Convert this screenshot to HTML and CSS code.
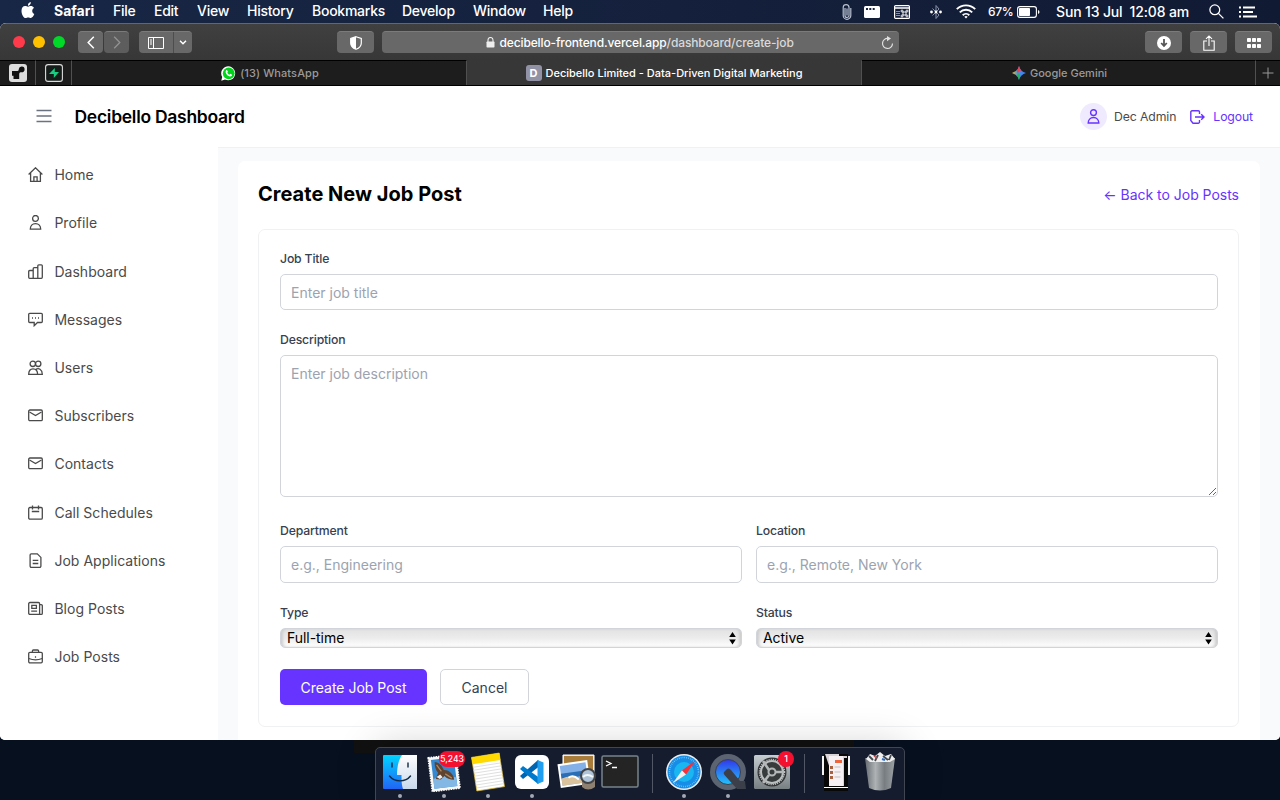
FILE: index.html
```html
<!DOCTYPE html>
<html lang="en">
<head>
<meta charset="utf-8">
<title>Decibello Limited - Data-Driven Digital Marketing</title>
<link rel="stylesheet" href="styles.css">
</head>
<body>
<div class="desktop">
  <header class="menubar">
    <nav class="menus">
      <svg class="apple" width="14" height="17" viewBox="0 0 14 17" fill="#fff"><path d="M9.800 0C8 .3 6.800 1.800 7 3.700 8.700 3.700 10 2 9.800 0ZM7.100 4.700C6 4.700 5.400 4.100 4.100 4.100 2 4.100.5 5.900.5 8.900c0 3.500 2.100 7.100 4.100 7.100 1 0 1.400-.6 2.600-.6s1.500.6 2.600.6c1.500 0 2.700-2 3.500-3.900C10.700 10.800 10.500 7.200 13 5.900 12.200 4.700 11 4.100 9.800 4.100 8.600 4.100 8 4.700 7.100 4.700Z"/></svg>
      <span class="app-name">Safari</span><span>File</span><span>Edit</span><span>View</span><span>History</span><span>Bookmarks</span><span>Develop</span><span>Window</span><span>Help</span>
    </nav>
    <div class="status">
      <svg width="10" height="16" viewBox="0 0 10 16" fill="none" stroke="#b9c1d2" stroke-width="1.200"><path d="M3 4v7.500a2 2 0 0 0 4 0V3.500a2.600 2.600 0 0 0-5.800 0v8a3.800 3.800 0 0 0 7.600 0V4M5 4.500v7"/></svg>
      <svg width="16" height="12" viewBox="0 0 16 12"><rect width="16" height="12" rx="1.500" fill="#fff"/><path d="M2 2h2v2H2zM5.300 2h2v2h-2zM8.700 2h2v2h-2z" fill="#17233f"/></svg>
      <svg width="16" height="14" viewBox="0 0 16 14"><rect x=".6" y=".6" width="14.800" height="12.800" rx="1" fill="none" stroke="#fff" stroke-width="1.200"/><path d="M1 3h14" stroke="#fff" stroke-width="1.500"/><path d="M3 6v6M5 6v6" stroke="#fff" stroke-dasharray="1 1"/><path d="M9 7h3v3H9zM9 7H8a1 1 0 1 1 1-1zM12 7V6a1 1 0 1 1 1 1zM12 10h1a1 1 0 1 1-1 1zM9 10v1a1 1 0 1 1-1-1z" fill="none" stroke="#fff" stroke-width=".9"/></svg>
      <svg width="12" height="16" viewBox="0 0 12 16"><path d="M2.500 4.500 9 11l-3 3.500v-13L9 5l-6.500 6.500" fill="none" stroke="#8792a9"/><circle cx="1.500" cy="8" r="1.400" fill="#fff"/><circle cx="6" cy="8" r="1.400" fill="#fff"/><circle cx="10.500" cy="8" r="1.400" fill="#fff"/></svg>
      <svg width="20" height="15" viewBox="0 0 20 15" fill="none" stroke="#fff" stroke-width="1.900"><path d="M.8 5.200a13 13 0 0 1 18.400 0M3.800 8.300a8.800 8.800 0 0 1 12.400 0M6.700 11.200a4.700 4.700 0 0 1 6.600 0"/><path d="m10 14.500-1.700-1.800a2.500 2.500 0 0 1 3.400 0z" fill="#fff" stroke="none"/></svg>
      <span class="battery-text">67%</span>
      <svg width="23" height="12" viewBox="0 0 23 12"><rect x=".6" y=".6" width="18.800" height="10.800" rx="2.300" fill="none" stroke="#fff" stroke-width="1.100"/><rect x="2" y="2" width="11" height="8" rx=".8" fill="#fff"/><path d="M21 4v4q1.500-.5 1.500-2T21 4" fill="#fff"/></svg>
      <span class="clock">Sun 13 Jul&nbsp; 12:08 am</span>
      <svg width="15" height="15" viewBox="0 0 15 15" fill="none" stroke="#fff" stroke-width="1.300"><circle cx="5.800" cy="5.800" r="4.900"/><path d="m9.400 9.400 5 5"/></svg>
      <svg width="18" height="12" viewBox="0 0 18 12" stroke="#fff" stroke-width="1.900"><path d="M0 1.500h2M0 6h2M0 10.500h2M4 1.500h12M4 6h10M4 10.500h14"/></svg>
    </div>
  </header>

  <main class="window">
    <div class="toolbar">
      <div class="lights"><i class="red"></i><i class="yellow"></i><i class="green"></i></div>
      <div class="history">
        <span class="tool"><svg width="8" height="13" viewBox="0 0 8 13" fill="none" stroke="#fff" stroke-width="1.500"><path d="M6.800.8 1.200 6.500l5.600 5.700"/></svg></span>
        <span class="tool"><svg width="8" height="13" viewBox="0 0 8 13" fill="none" stroke="#929292" stroke-width="1.300"><path d="m1.200.8 5.600 5.700-5.600 5.700"/></svg></span>
      </div>
      <div class="tool side-tools">
        <span class="side-toggle"><svg width="16" height="12" viewBox="0 0 16 12" fill="none" stroke="#fff"><path d="M.5.500h15v11H.5zM5.500.5v11M2 3h2M2 5h2M2 7h2"/></svg></span>
        <span class="side-menu"><svg width="8" height="5" viewBox="0 0 8 5" fill="none" stroke="#fff" stroke-width="1.500"><path d="m1 .8 3 3 3-3"/></svg></span>
      </div>
      <span class="tool shield"><svg width="12" height="14" viewBox="0 0 12 14"><path d="M6 .7 11.300 2.500V7c0 3.500-2.300 5.200-5.300 6.300C3 12.200.7 10.500.7 7V2.500z" fill="none" stroke="#fff" stroke-width="1.200"/><path d="M6 .7v12.600C3 12.200.7 10.500.7 7V2.500z" fill="#fff"/></svg></span>
      <div class="tool address">
        <svg width="9" height="11" viewBox="0 0 9 11"><rect x=".5" y="4.500" width="8" height="6" rx=".8" fill="#eee"/><path d="M2 5V3a2.500 2.500 0 0 1 5 0v2" fill="none" stroke="#eee" stroke-width="1.100"/></svg>
        <span class="url">decibello-frontend.vercel.app<em>/dashboard/create-job</em></span>
        <svg class="reload" width="13" height="14" viewBox="0 0 13 14"><path d="M7 2.500A5 5 0 1 0 11.500 7.500" fill="none" stroke="#e0e0e0" stroke-width="1.200"/><path d="M6 0v5.200l4-2.600z" fill="#e0e0e0"/></svg>
      </div>
      <div class="right-tools">
        <span class="tool"><svg width="14" height="14" viewBox="0 0 14 14"><circle cx="7" cy="7" r="7" fill="#fff"/><path d="M7 3v6M4.200 7 7 10l2.800-3" fill="none" stroke="#555" stroke-width="1.800"/></svg></span>
        <span class="tool"><svg width="12" height="16" viewBox="0 0 12 16" fill="none" stroke="#fff" stroke-width="1.100"><path d="M4 6H.8v9.200h10.400V6H8M6 11V1M3 3.800 6 .9l3 2.900"/></svg></span>
        <span class="tool"><svg width="14" height="10" viewBox="0 0 14 10" fill="#fff"><rect width="4" height="4" rx=".8"/><rect x="5" width="4" height="4" rx=".8"/><rect x="10" width="4" height="4" rx=".8"/><rect y="6" width="4" height="4" rx=".8"/><rect x="5" y="6" width="4" height="4" rx=".8"/><rect x="10" y="6" width="4" height="4" rx=".8"/></svg></span>
      </div>
    </div>

    <div class="tabs">
      <div class="tab"><svg width="18" height="18" viewBox="0 0 18 18"><rect width="18" height="18" rx="3" fill="#ddd"/><path d="M3 7h5.500C9.800 7 9.800 5.500 9.800 5a2.900 2.900 0 1 1 2.900 3.200c-1.500 0-2.500.3-2.500 1.800v5H4.500v-3.200H3z" fill="#111"/></svg></div>
      <div class="tab"><svg width="18" height="18" viewBox="0 0 18 18"><rect x=".6" y=".6" width="16.800" height="16.800" rx="2.500" fill="#151c19" stroke="#ddd" stroke-width="1.100"/><path d="M9.800 4 4 10h4.800v4L14 8H9.800z" fill="#17ce83"/></svg></div>
      <div class="tab named"><svg width="15" height="15" viewBox="0 0 15 15"><path d="M.3 14.700 1.200 11A7 7 0 1 1 4 13.600z" fill="#fff"/><circle cx="7.700" cy="7.300" r="5.900" fill="#00d51c"/><path d="M5.200 4.200c1-.7 1.400.9 1.700 1.600l-.6.900c.6 1.100 1.300 1.700 2.200 2l.9-.9 1.700 1c0 1.500-1.500 2-2.800 1.500C6.200 9.500 3.400 6.500 5.200 4.200" fill="#fff"/></svg><span class="tab-wa">(13) WhatsApp</span></div>
      <div class="tab active"><b class="favicon">D</b><span>Decibello Limited - Data-Driven Digital Marketing</span></div>
      <div class="tab named"><svg width="14" height="14" viewBox="0 0 14 14"><defs><linearGradient id="gem" x1="0" x2="1"><stop offset="0" stop-color="#f5c21b"/><stop offset=".4" stop-color="#4a90d9"/><stop offset="1" stop-color="#3b7cff"/></linearGradient></defs><path d="M7 0Q8.500 5.500 14 7 8.500 8.500 7 14 5.500 8.500 0 7 5.500 5.500 7 0" fill="url(#gem)"/><path d="M7 0q.6 2.600 2 4.300L5.500 7 4.800 4.700Q6.300 3 7 0" fill="#f23e4c"/><path d="M7 14q-.6-3-2.200-4.700L6.500 7l2 2.500Q7.600 11.500 7 14" fill="#22b35b"/></svg><span class="tab-gem">Google Gemini</span></div>
      <div class="tab"><svg width="12" height="12" viewBox="0 0 12 12" stroke="#999"><path d="M6 .5v11M.5 6h11"/></svg></div>
    </div>

    <div class="page">
      <header class="app-header">
        <svg width="16" height="14" viewBox="0 0 16 14" stroke="#6b7280" stroke-width="1.400"><path d="M.5 1.500h15M.5 7h15M.5 12.500h15"/></svg>
        <span class="brand">Decibello Dashboard</span>
        <div class="account">
          <span class="avatar"><svg width="15" height="15" viewBox="0 0 15 15" fill="none" stroke="#6633ff" stroke-width="1.400"><circle cx="7.500" cy="3.600" r="2.900"/><path d="M2.200 14c0-3 2-5.500 5.300-5.500s5.300 2.500 5.300 5.500z"/></svg></span>
          <span class="user-name">Dec Admin</span>
          <svg width="15" height="14" viewBox="0 0 15 14" fill="none" stroke="#6633ff" stroke-width="1.400"><path d="M9.500 4V2a1.200 1.200 0 0 0-1.200-1.200H2A1.200 1.200 0 0 0 .8 2v8.500L3 13.200h5.300A1.200 1.200 0 0 0 9.500 12v-2M5 7h9M11.200 4.200 14 7l-2.800 2.800"/></svg>
          <span class="logout">Logout</span>
        </div>
      </header>
      <div class="app-body">
        <nav class="sidebar">
          <a><svg viewBox="0 0 15 15"><path d="M.6 7.500 7.500.8l6.900 6.700M2.600 5.800v8.600h9.800V5.800M5.900 14.400V9.800h3.200v4.600"/></svg>Home</a>
          <a><svg viewBox="0 0 15 15"><circle cx="7.500" cy="3.400" r="2.900"/><path d="M2.300 14.200c0-3.200 2-5.600 5.200-5.600s5.200 2.400 5.200 5.600z"/></svg>Profile</a>
          <a><svg viewBox="0 0 15 15"><path d="M5.200 14.300H1.700a1 1 0 0 1-1-1V7.500a1 1 0 0 1 1-1h3.500M5.200 14.300V4.700a1 1 0 0 1 1-1h3.600M5.200 14.300h4.600V1.800a1 1 0 0 1 1-1h2.500a1 1 0 0 1 1 1v11.500a1 1 0 0 1-1 1H9.800"/></svg>Dashboard</a>
          <a><svg viewBox="0 0 15 15"><path d="M1.700 1.300h11.600a1 1 0 0 1 1 1v7.200a1 1 0 0 1-1 1H9.500L6.200 13.700v-3.200H1.700a1 1 0 0 1-1-1V2.300a1 1 0 0 1 1-1zM4 6h1M7 6h1M10 6h1"/></svg>Messages</a>
          <a><svg viewBox="0 0 15 15"><circle cx="4.800" cy="3.800" r="2.700"/><circle cx="10.200" cy="3.800" r="2.700"/><path d="M.7 14.300c0-3.200 1.600-5.500 4.300-5.500 2.800 0 4.600 2.300 4.600 5.500zM7.500 9.800c3-2.500 6.800-.3 6.800 4.500H9.600"/></svg>Users</a>
          <a><svg viewBox="0 0 15 15"><rect x=".7" y="2" width="13.600" height="10.700" rx="1.200"/><path d="m1.500 4 6 3.500 6-3.500"/></svg>Subscribers</a>
          <a><svg viewBox="0 0 15 15"><rect x=".7" y="2" width="13.600" height="10.700" rx="1.200"/><path d="m1.500 4 6 3.500 6-3.500"/></svg>Contacts</a>
          <a><svg viewBox="0 0 15 15"><rect x=".7" y="2.500" width="13.600" height="11.600" rx="1.200"/><path d="M4.500.5v4M10.500.5v4M3.800 6.500h7.400"/></svg>Call Schedules</a>
          <a><svg viewBox="0 0 15 15"><path d="M3.300.8h6l3.600 3.600v8.700a1.200 1.200 0 0 1-1.200 1.200H3.300a1.200 1.200 0 0 1-1.200-1.200V2A1.200 1.200 0 0 1 3.300.8zM4.700 7.300h5.600M4.700 10.500h5.600"/></svg>Job Applications</a>
          <a><svg viewBox="0 0 15 15"><path d="M1.900 1.500h8.500a1.200 1.200 0 0 1 1.200 1.200v10.700H1.900a1.200 1.200 0 0 1-1.200-1.200V2.700a1.200 1.200 0 0 1 1.200-1.200zM11.600 3.700h1.700a1 1 0 0 1 1 1v7.700a1 1 0 0 1-1 1h-1.700M3.800 4.300h4.600v3H3.800zM3.200 10.200h5.900"/></svg>Blog Posts</a>
          <a><svg viewBox="0 0 15 15"><rect x=".7" y="3.300" width="13.600" height="10.500" rx="1.200"/><path d="M4.400 3.300V2a1 1 0 0 1 1-1h4.200a1 1 0 0 1 1 1v1.300M.8 9.500q6.700 2.800 13.400 0M6.900 8h1.200"/></svg>Job Posts</a>
        </nav>
        <section class="content">
          <div class="panel">
            <div class="panel-head"><h1>Create New Job Post</h1><a class="back">← Back to Job Posts</a></div>
            <form class="form">
              <label for="title">Job Title</label>
              <input id="title" class="control" placeholder="Enter job title">
              <label for="desc">Description</label>
              <textarea id="desc" class="control" placeholder="Enter job description"></textarea>
              <div class="columns">
                <div><label for="dept">Department</label><input id="dept" class="control tall" placeholder="e.g., Engineering"></div>
                <div><label for="loc">Location</label><input id="loc" class="control tall" placeholder="e.g., Remote, New York"></div>
                <div><label>Type</label><div class="select"><span>Full-time</span><svg width="7" height="13" viewBox="0 0 7 13"><path d="m3.500 0 3.300 5H.2zM.2 7.500h6.600l-3.300 5z"/></svg></div></div>
                <div><label>Status</label><div class="select"><span>Active</span><svg width="7" height="13" viewBox="0 0 7 13"><path d="m3.500 0 3.300 5H.2zM.2 7.500h6.600l-3.300 5z"/></svg></div></div>
              </div>
              <div class="actions"><button type="button" class="primary">Create Job Post</button><button type="button" class="secondary">Cancel</button></div>
            </form>
          </div>
        </section>
      </div>
    </div>
  </main>

  <footer class="dock-area">
    <div class="dock">
      <div class="app running"><svg viewBox="0 0 40 40"><defs><linearGradient id="fb" x2="0" y2="1"><stop stop-color="#00d4ff"/><stop offset="1" stop-color="#2264f5"/></linearGradient><linearGradient id="fw" x2="0" y2="1"><stop stop-color="#fff"/><stop offset="1" stop-color="#c9d9ec"/></linearGradient></defs><rect x="3" y="3" width="34" height="34" rx="1" fill="url(#fb)"/><path d="M22 3h15v34H23c-1.200-4-1.500-7-1.500-14H17C17 15 18.500 8 22 3z" fill="url(#fw)"/><path d="M12 11v4M28 11v4M9.500 24c5 6.500 16 6.500 21 0" fill="none" stroke="#102a45" stroke-width="1.400" stroke-linecap="round"/></svg></div>
      <div class="app running"><svg viewBox="0 0 40 40"><g transform="rotate(-7 20 20)"><rect x="6" y="4" width="28" height="34" fill="#f7f7f3" stroke="#fff" stroke-width="1.600" stroke-dasharray="1.500 1"/><rect x="8.500" y="6.500" width="23" height="29" fill="#3487d1"/><path d="M8.500 26q11-5 23 1v8.500h-23z" fill="#83b8e4"/><path d="M12 9c5 1 7 5 8 9 5 0 10 6 9 11-4-1-7-2-9-5l-4 3-5-1 3-6c-2-3-3-7-2-11" fill="#60432f"/><path d="m13.500 12 4 7M21 22l6 5" stroke="#a98862" stroke-width="1.300"/><path d="m12 24 4-2 2 3-3 1.500z" fill="#eee"/></g></svg><b class="badge wide">5,243</b></div>
      <div class="app running"><svg viewBox="0 0 40 40"><g transform="rotate(-9 20 20)"><rect x="6" y="3" width="28" height="34" fill="#fff" stroke="#d9b72b" stroke-width=".7"/><path d="M6 3h28v7H6z" fill="#ffd900"/><path d="M6 13h28M6 16h28M6 19h28M6 22h28M6 25h28M6 28h28M6 31h28M6 34h28" stroke="#d9d9d9" stroke-width=".8"/></g></svg></div>
      <div class="app running"><svg viewBox="0 0 40 40"><rect x="3" y="3" width="34" height="34" rx="6" fill="#fff"/><path d="m26 8-18 16 3 3 18-14z" fill="#0065b3"/><path d="m11 14-3 3 18 15 3-5z" fill="#007acc"/><path d="m25.500 8 6 2.500v19l-6 2.500z" fill="#209ff0"/></svg></div>
      <div class="app"><svg viewBox="0 0 40 40"><path d="M7 3h31v25H7z" fill="#ead8b0" stroke="#fff"/><path d="M8 4h29v23H8z" fill="#a87d3c"/><g transform="rotate(-8 18 22)"><path d="M3 10h30v24H3z" fill="#fff"/><path d="M5 12h26v20H5z" fill="#84b0e8"/><path d="M5 20h26v5H5z" fill="#2b6eb6"/><path d="M5 25q9-3 14 1t12-1v7H5z" fill="#d9c29c"/><path d="M12 25q5-3 10 3" stroke="#fff" stroke-width="2" fill="none"/></g><path d="M26 23v12q6 5 13 0V23z" fill="#8e8171"/><circle cx="32" cy="24" r="7" fill="#afc4d8" stroke="#444" stroke-width="2"/><path d="M27 25q4-4 10 0" stroke="#f3f7f8" stroke-width="2" fill="none"/></svg></div>
      <div class="app"><svg viewBox="0 0 40 40"><rect x="2" y="4" width="36" height="31" rx="1.500" fill="#242424" stroke="#76838b" stroke-width="1.500"/><path d="m6 9 5 2.500L6 14M12 15.500h5" fill="none" stroke="#fff" stroke-width="1.300"/></svg></div>
      <i class="divider"></i>
      <div class="app running"><svg viewBox="0 0 40 40"><circle cx="20" cy="20" r="18" fill="#eee"/><circle cx="20" cy="20" r="16.500" fill="#168de6"/><circle cx="20" cy="20" r="10" fill="#19b6f1"/><circle cx="20" cy="20" r="14.500" fill="none" stroke="#9cd4f8" stroke-width="1.500" stroke-dasharray=".6 1.300"/><path d="m31.500 8.500-9.500 14-4-4z" fill="#ff2d35"/><path d="m8.500 31.500 9.500-13 4 4z" fill="#eee"/></svg></div>
      <div class="app running"><svg viewBox="0 0 40 40"><defs><linearGradient id="qt" x2="0" y2="1"><stop stop-color="#3038ed"/><stop offset="1" stop-color="#22c3fa"/></linearGradient></defs><circle cx="20" cy="20" r="18" fill="#5d6471"/><circle cx="20" cy="20" r="12.500" fill="url(#qt)" stroke="#3c414b"/><path d="m16 20 3-3q2-1.500 4 1l9 11h5l1 8h-9L16.500 23q-1.500-2-.5-3" fill="#3b3f49"/></svg></div>
      <div class="app"><svg viewBox="0 0 40 40"><defs><linearGradient id="sp" x2="0" y2="1"><stop stop-color="#c6ced1"/><stop offset="1" stop-color="#777f83"/></linearGradient></defs><rect x="2" y="3" width="36" height="34" rx="1.500" fill="url(#sp)"/><circle cx="20" cy="20" r="14.500" fill="#303233"/><circle cx="20" cy="20" r="11" fill="#383b3c" stroke="#bcbfc0" stroke-width="2"/><circle cx="20" cy="20" r="12.500" fill="none" stroke="#bcbfc0" stroke-width="1.500" stroke-dasharray="1.200 1"/><circle cx="20" cy="20" r="3.500" fill="none" stroke="#b4b7b8" stroke-width="2"/><path d="m17 18-6-9M24 20h8M17 23l-6 8" stroke="#b4b7b8" stroke-width="2.500"/></svg><b class="badge">1</b></div>
      <i class="divider"></i>
      <div class="app"><svg viewBox="0 0 40 40"><path d="M6 4h28v19H6z" fill="#f4f4f4"/><path d="M8 2h24v37H8z" fill="#080808"/><path d="M9 2h14v2h8v30H20z" fill="#d9d3d8"/><path d="M13 4h14v30H13z" fill="#f6eff3"/><path d="M19 8h7v3h-7z" fill="#ef643c"/><path d="M14 14h3v3h-3zM14 19h3v3h-3zM14 24h3v3h-3z" fill="#a96142"/><path d="M18.500 15h6M18.500 20h6M18.500 25h6" stroke="#c3bcc0"/><path d="M28 6h4v28h-4z" fill="#080808"/><path d="M8 35.500h24" stroke="#fff"/></svg></div>
      <div class="app"><svg viewBox="0 0 40 40"><defs><linearGradient id="tr"><stop stop-color="#666c70"/><stop offset=".35" stop-color="#aeb2b5"/><stop offset=".65" stop-color="#777d81"/><stop offset="1" stop-color="#9da2a5"/></linearGradient></defs><path d="M5 6h30l-4 30q-11 5-22 0z" fill="url(#tr)"/><path d="m6 7 4-5 5 2 5-4 5 4 6-2 4 5-5 3H10z" fill="#eee"/><path d="m9 4 4 4M18 3l-3 6M23 4l5 4M31 3l-2 5" stroke="#43494e" stroke-width="1.800"/><path d="m14 4 3 2" stroke="#c44" stroke-width="1.500"/><path d="m22 7 3 1" stroke="#2a6cd1" stroke-width="2"/></svg></div>
    </div>
  </footer>
</div>
</body>
</html>
```
FILE: styles.css
```css
* { box-sizing: border-box; }
body { margin: 0; font-family: Inter, "Liberation Sans", sans-serif; }
svg { display: block; flex: none; }
i, em { font-style: normal; }

.desktop { width: 1280px; height: 800px; overflow: hidden; display: flex; flex-direction: column; background: linear-gradient(90deg, #182746, #111a33) top / 100% 40px no-repeat, #07101f; }

.menubar { height: 23px; display: flex; justify-content: space-between; color: #fff; font-size: 14px; font-weight: 500; }
.menus { display: grid; grid-template-columns: 33px 59px 41px 43px 50px 65px 90px 71px 70px 60px; padding-left: 21px; line-height: 22px; letter-spacing: -.25px; white-space: nowrap; }
.apple { margin-top: 2px; }
.app-name { font-weight: 700; letter-spacing: 0; }
.status { display: flex; align-items: center; padding-right: 23px; line-height: 22px; white-space: nowrap; }
.status svg:nth-child(2) { margin-left: 12px; }
.status svg:nth-child(3) { margin-left: 14px; }
.status svg:nth-child(4) { margin-left: 20px; }
.status svg:nth-child(5) { margin-left: 14px; }
.status svg:last-child { margin-left: 15px; }
.battery-text { width: 29px; margin-left: 12px; font-size: 12px; letter-spacing: -.3px; }
.clock { width: 153px; margin-left: 16px; letter-spacing: -.15px; }

.window { height: 717px; display: flex; flex-direction: column; overflow: hidden; border-radius: 6px 6px 5px 5px; background: #fff; }
.toolbar { height: 37px; display: flex; align-items: center; padding: 0 8px 0 13px; background: linear-gradient(#404040, #373737); border-top: 1px solid #666; }
.lights { display: flex; gap: 8px; }
.lights i { width: 12px; height: 12px; border-radius: 50%; }
.red { background: #ff3b4b; }
.yellow { background: #ffc000; }
.green { background: #00d928; }
.tool { height: 22px; display: flex; align-items: center; justify-content: center; border-radius: 4px; background: #686868; border-top: 1px solid #7b7b7b; }
.history { display: flex; gap: 1px; margin-left: 13px; }
.history .tool { width: 25px; }
.history .tool + .tool { background: #5d5d5d; }
.side-tools { width: 53px; margin-left: 10px; }
.side-toggle, .side-menu { height: 21px; display: grid; place-items: center; }
.side-toggle { width: 35px; border-right: 1px solid #4d4d4d; }
.side-menu { width: 18px; }
.shield { width: 37px; margin-left: 145px; }
.address { width: 517px; margin-left: 8px; padding: 0 5px 0 104px; justify-content: flex-start; color: #fff; font-size: 12px; font-weight: 500; white-space: nowrap; }
.url { margin-left: 4.5px; letter-spacing: -.13px; }
.url em { color: #dadada; }
.reload { margin-left: auto; }
.right-tools { display: flex; gap: 8px; margin-left: auto; }
.right-tools .tool { width: 37px; }

.tabs { height: 26px; display: grid; grid-template-columns: 36px 36px 395px 395px 394px 24px; background: #1d1d1d; border-bottom: 1px solid #000; }
.tab { display: flex; align-items: center; justify-content: center; gap: 4px; border-top: 1px solid #000; border-right: 1px solid #505050; color: #9a9a9a; font-size: 11px; font-weight: 500; white-space: nowrap; }
.tab:last-child { border-right: 0; }
.tab.named { padding-left: 2px; }
.tab.active { background: #373737; border-top-color: #373737; color: #fff; }
.favicon { width: 16px; height: 16px; border-radius: 3px; background: #9292a6; font-size: 11px; line-height: 16px; text-align: center; }
.tab-wa { letter-spacing: .1px; }

.page { flex: 1; display: flex; flex-direction: column; min-height: 0; }
.app-header { height: 62px; display: flex; align-items: center; padding: 0 27px 1px 36px; border-bottom: 1px solid #f0f1f3; flex: none; }
.brand { margin-left: 22.5px; font-size: 17.5px; font-weight: 600; letter-spacing: -.28px; }
.account { display: flex; align-items: center; margin-left: auto; padding-top: 1px; font-size: 12.25px; letter-spacing: -.12px; }
.avatar { width: 27px; height: 27px; display: grid; place-items: center; border-radius: 50%; background: #f0eaff; }
.user-name { margin: 0 14px 0 7px; color: #4b4b4b; }
.logout { margin-left: 8px; color: #6633ff; }
.app-body { flex: 1; display: flex; min-height: 0; }
.sidebar { width: 218px; padding: 3.6px 0 0 28px; margin-top: -1px; background: #fff; color: #4a4a4a; }
.sidebar a { height: 48.2px; display: flex; align-items: center; gap: 11.4px; font-size: 14px; letter-spacing: .03px; }
.sidebar svg { width: 15px; height: 15px; fill: none; stroke: #4a4a4a; stroke-width: 1.3; }
.content { flex: 1; padding: 13px 20px 0; background: #f9fafb; overflow: hidden; }
.panel { height: 650px; padding: 0 21px 0 20px; border-radius: 7px; background: #fff; }
.panel-head { height: 68px; display: flex; align-items: center; justify-content: space-between; }
h1 { margin: 0; padding-bottom: 2px; font-size: 20px; font-weight: 700; letter-spacing: .02px; }
.back { padding-bottom: 2px; font-size: 14px; letter-spacing: -.02px; color: #6633ff; }
.form { height: 498px; padding: 20px 20px 0 21px; border: 1px solid #f0f1f3; border-radius: 7px; }
label { display: block; height: 24px; padding-top: 1px; font-size: 12.25px; line-height: 16px; font-weight: 500; letter-spacing: -.17px; color: #374151; }
.control { display: block; width: 100%; height: 36px; margin: 0 0 21px; padding: 1px 10px 0; border: 1px solid #d1d5db; border-radius: 5px; background: #fff; font: 14px Inter, sans-serif; outline: 0; }
.control::placeholder { color: #9ca3af; opacity: 1; }
textarea.control { height: 142px; margin-bottom: 25px; padding: 8px 10px; line-height: 20px; resize: vertical; }
.columns { display: grid; grid-template-columns: 1fr 1fr; column-gap: 14px; }
.control.tall { height: 37px; padding: 0 10px 1px; }
.select { height: 20px; display: flex; align-items: center; justify-content: space-between; padding: 0 5px 0 6px; border: 1px solid #d1d5db; border-radius: 5px; background: linear-gradient(#e2e2e2, #ececec 50%, #fff); box-shadow: inset 3px 0 3px -1px #ccc, inset -3px 0 3px -1px #ccc; font-size: 14px; line-height: 18px; }
.select span { letter-spacing: -.05px; }
.actions { display: flex; gap: 13px; margin-top: 21px; }
button { height: 36px; border-radius: 5px; padding: 0; font: 14px Inter, sans-serif; }
.primary { width: 147px; border: 0; color: #fff; background: #6633ff; }
.secondary { width: 89px; border: 1px solid #d1d5db; color: #374151; background: #fff; }

.dock-area { height: 60px; padding-top: 7px; display: flex; justify-content: center; background: linear-gradient(#111, #111) 354px 0 / 500px 13px no-repeat; }
.dock { position: relative; width: 530px; height: 54px; padding: 0 2px; display: grid; grid-template-columns: repeat(6, 44px) 20px repeat(3, 44px) 20px repeat(2, 44px); border: 1px solid #414653; border-radius: 5px 5px 0 0; background: #151c2e; box-shadow: 0 0 40px rgba(0, 0, 0, .2); }
.app { position: relative; padding: 4px 2px 0; }
.app > svg { width: 40px; height: 40px; }
.running::after { content: ""; position: absolute; width: 4px; height: 4px; left: 20px; bottom: 2px; border-radius: 50%; background: #a4a8b5; }
.badge { position: absolute; top: 3px; right: 0; width: 16px; height: 16px; border-radius: 8px; background: #f4112f; color: #fff; font-size: 9px; font-weight: 500; line-height: 16px; text-align: center; }
.badge.wide { right: 1px; width: 26px; font-size: 8.5px; }
.divider { width: 1px; height: 39px; margin: 6px 0 0 10px; background: #515765; }
```
